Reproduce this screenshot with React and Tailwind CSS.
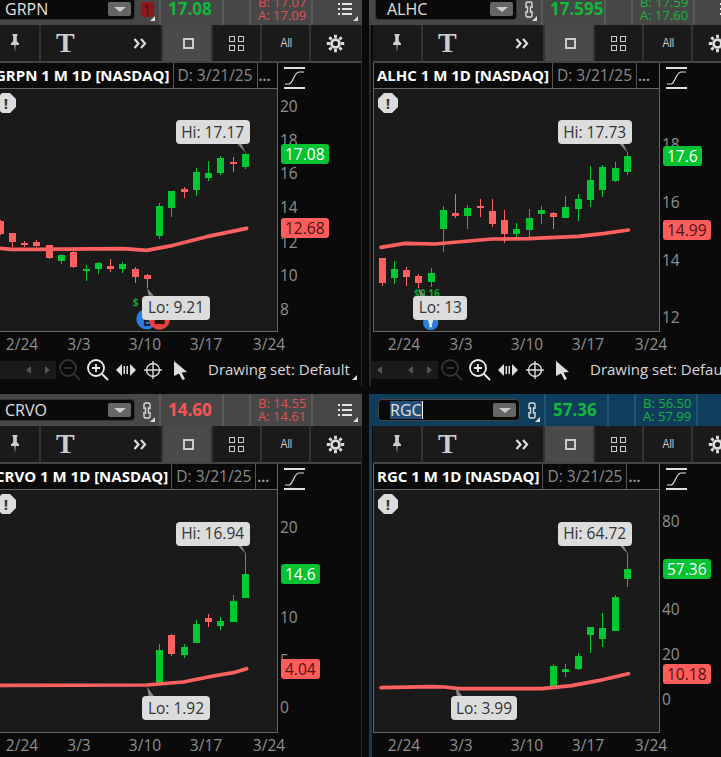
import React from 'react';

const G = '#00c832';
const R = '#ff6060';

const panels = [
  {
    sym: 'GRPN', price: '17.08', up: true, bid: '17.07', ask: '17.09', badge: true, x0: -27, y0: -93,
    candles: [
      [2, 300, 345, 303, 342, R], [38, 339, 382, 339, 366, R], [74, 364, 382, 369, 375, R], [110, 360, 382, 366, 378, R],
      [148, 375, 417, 375, 414, R], [184, 402, 432, 405, 423, G], [221, 393, 444, 396, 441, R], [258, 435, 483, 447, 453, G],
      [295, 426, 462, 429, 447, G], [331, 417, 456, 438, 447, R], [368, 426, 459, 432, 447, G], [405, 441, 489, 447, 471, R],
      [442, 462, 504, 465, 477, R], [478, 249, 357, 258, 348, G], [515, 213, 291, 213, 264, G], [552, 201, 234, 207, 216, R],
      [589, 144, 228, 156, 210, G], [626, 123, 183, 159, 174, G], [662, 108, 165, 114, 159, G], [699, 111, 156, 126, 132, R],
      [736, 99, 147, 102, 141, G],
    ],
    ma: '-27,383 36,388 110,388 370,386 440,391 520,376 620,350 740,325',
    hi: { text: 'Hi: 17.17', x: 527, y: 1, w: 222, ptr: '712,71 724,71 737,98' },
    lo: { text: 'Lo: 9.21', x: 427, y: 527, w: 202, ptr: '441,505 446,527 462,527' },
    axis: [['20', -42], ['18', 60], ['16', 160], ['14', 262], ['12', 365], ['10', 466], ['8', 568]],
    tags: [['17.08', 102, true], ['12.68', 325, false]],
    marks: 'grpn',
  },
  {
    sym: 'ALHC', price: '17.595', up: true, bid: '17.59', ask: '17.60', x0: 24, y0: -93,
    candles: [
      [52, 414, 497, 414, 488, R], [88, 423, 491, 447, 473, G], [124, 441, 497, 450, 470, R], [161, 462, 505, 468, 488, R],
      [199, 444, 500, 459, 485, G], [235, 258, 395, 270, 326, G], [271, 222, 293, 279, 288, R], [308, 255, 326, 264, 288, G],
      [345, 237, 290, 258, 264, R], [382, 237, 320, 273, 312, R], [418, 270, 368, 300, 342, R], [455, 309, 352, 327, 342, G],
      [492, 267, 355, 294, 329, G], [529, 258, 311, 270, 282, G], [565, 276, 326, 279, 290, R], [602, 228, 293, 261, 293, G],
      [640, 222, 303, 237, 266, G], [676, 138, 261, 180, 240, G], [712, 135, 231, 141, 209, G], [750, 126, 185, 144, 182, G],
      [787, 96, 165, 108, 156, G],
    ],
    ma: '48,382 120,370 210,372 380,357 490,356 640,349 720,340 790,330',
    hi: { text: 'Hi: 17.73', x: 578, y: 1, w: 222, ptr: '763,71 775,71 788,98' },
    lo: { text: 'Lo: 13', x: 145, y: 527, w: 162, ptr: '160,505 165,527 181,527' },
    axis: [['18', 72], ['16', 247], ['14', 419], ['12', 590]],
    tags: [['17.6', 108, true], ['14.99', 331, false]],
    marks: 'alhc',
  },
  {
    sym: 'CRVO', price: '14.60', up: false, bid: '14.55', ask: '14.61', x0: -27, y0: -60,
    candles: [
      [478, 402, 520, 420, 520, G], [515, 372, 438, 375, 432, R], [552, 402, 444, 411, 435, G], [589, 330, 399, 342, 399, G],
      [626, 312, 351, 324, 336, R], [662, 321, 360, 333, 348, G], [699, 255, 336, 273, 336, G], [736, 130, 264, 192, 264, G],
    ],
    ma: '-27,526 440,525 550,516 640,498 700,488 740,476',
    hi: { text: 'Hi: 16.94', x: 527, y: 35, w: 222, ptr: '712,105 724,105 737,131' },
    lo: { text: 'Lo: 1.92', x: 427, y: 559, w: 202, ptr: '441,530 446,559 462,559' },
    axis: [['20', 50], ['10', 320], ['5', 450], ['0', 590]],
    tags: [['14.6', 192, true], ['4.04', 478, false]],
  },
  {
    sym: 'RGC', price: '57.36', up: true, bid: '56.50', ask: '57.99', active: true, x0: 24, y0: -60,
    candles: [
      [565, 462, 527, 468, 527, G], [602, 462, 500, 477, 486, G], [640, 429, 480, 438, 477, G], [676, 351, 429, 351, 375, G],
      [712, 309, 411, 354, 387, G], [750, 255, 364, 261, 363, G], [787, 130, 231, 177, 207, G],
    ],
    ma: '48,533 200,530 240,531 280,536 530,536 620,527 700,512 790,491',
    hi: { text: 'Hi: 64.72', x: 578, y: 35, w: 222, ptr: '763,105 775,105 788,131' },
    lo: { text: 'Lo: 3.99', x: 257, y: 559, w: 200, ptr: '271,530 276,559 292,559' },
    axis: [['80', 32], ['40', 298], ['20', 431], ['0', 566]],
    tags: [['57.36', 178, true], ['10.18', 493, false]],
  },
];

const dates = [['2/24', 31], ['3/3', 88], ['3/10', 154], ['3/17', 215], ['3/24', 278]];

function Triangle() {
  return (
    <svg width="5" height="5" viewBox="0 0 5 5" className="absolute right-[4px] bottom-[4px]">
      <polygon points="5,0 5,5 0,5" fill="#ddd" />
    </svg>
  );
}

function LinkIcon() {
  return (
    <svg width="10" height="17" viewBox="0 0 10 17" fill="none" stroke="#ddd" strokeWidth="1.4">
      <path d="M2 5V2.5C2 1.500 2.500 1 3.500 1H6.500C7.500 1 8 1.500 8 2.500V5" />
      <path d="M2 12V14.500C2 15.500 2.500 16 3.500 16H6.500C7.500 16 8 15.500 8 14.500V12" />
      <path d="M1 6H3.500V11H1M9 6H6.500V11H9" />
    </svg>
  );
}

function ListIcon() {
  return (
    <svg width="14" height="14" viewBox="0 0 14 14" fill="#e5e5e5">
      <rect x="0" y="1" width="2" height="2" />
      <rect x="4" y="1" width="10" height="2" />
      <rect x="0" y="6" width="2" height="2" />
      <rect x="4" y="6" width="10" height="2" />
      <rect x="0" y="11" width="2" height="2" />
      <rect x="4" y="11" width="10" height="2" />
    </svg>
  );
}

function Header({ p }) {
  const color = p.up ? 'text-[#12b83a]' : 'text-[#ff5252]';
  const baColor = p.up && !p.badge ? 'text-[#12b83a]' : 'text-[#e05050]';
  const sep = p.active ? 'border-[#1c5678]' : 'border-[#5a5a5a]';
  return (
    <div className={`flex h-[32px] items-center pl-[6px] ${p.active ? 'bg-[#0f3d5c]' : 'bg-[#474747]'}`}>
      <div className={`flex h-[22px] w-[142px] items-center rounded-[4px] bg-[#0a0a0a] pl-[11px] pr-[3px] border ${p.active ? 'border-[#444]' : 'border-[#333]'}`}>
        <span className={`text-[16px] leading-[18px] text-[#e0e0e0] ${p.active ? 'bg-[#264f78] border-r border-white' : ''}`}>{p.sym}</span>
        <div className="ml-auto flex h-[14px] w-[23px] items-center justify-center rounded-[2px] bg-[#666]">
          <div className="h-0 w-0 border-x-[6px] border-t-[5px] border-x-transparent border-t-[#ccc]" />
        </div>
      </div>
      <div className="relative flex h-full w-[24px] items-center justify-center">
        {p.badge ? (
          <div className="flex h-[15px] w-[13px] items-center justify-center rounded-[2px] bg-[#8a1a1a] text-[14px] text-[#4d1010]">1</div>
        ) : (
          <LinkIcon />
        )}
        <Triangle />
      </div>
      <div className={`flex h-full w-[63px] items-center border-l-2 pl-[7px] text-[17px] font-bold ${sep} ${color}`}>{p.price}</div>
      <div className={`h-full w-[27px] border-l-2 ${sep}`} />
      <div className={`flex h-full w-[62px] flex-col justify-center border-l-2 pl-[7px] text-[13px] leading-[13px] ${sep} ${baColor}`}>
        <span>B: {p.bid}</span>
        <span>A: {p.ask}</span>
      </div>
      <div className={`relative flex h-full flex-1 items-center border-l-2 pl-[25px] ${sep}`}>
        <ListIcon />
        <Triangle />
      </div>
    </div>
  );
}

function ToolCell({ w, active, children }) {
  return (
    <div className={`flex h-full items-center justify-center border-r-2 border-[#333] ${w} ${active ? 'bg-[#4a4a4a]' : ''}`}>
      {children}
    </div>
  );
}

function Toolbar() {
  return (
    <div className="flex h-[38px] items-stretch border-b-2 border-[#444] bg-[#1a1a1a]">
      <ToolCell w="w-[50px]">
        <svg width="10" height="19" viewBox="0 0 10 19" fill="#ccc">
          <path d="M2.500 0H7.500V1.500L6.800 2V7L9 9.500V11H5.600L5 18.500L4.400 11H1V9.500L3.200 7V2L2.500 1.500Z" />
        </svg>
      </ToolCell>
      <ToolCell w="w-[122px]">
        <div className="flex w-full items-center pl-[15px]">
          <span className="font-['Liberation_Serif',serif] text-[28px] font-bold leading-[30px] text-[#ccc]">T</span>
          <svg width="14" height="11" viewBox="0 0 14 11" fill="none" stroke="#ddd" strokeWidth="2.200" className="ml-[58px] shrink-0">
            <path d="M1.500 1L5.500 5.500L1.500 10M8 1L12 5.500L8 10" />
          </svg>
        </div>
      </ToolCell>
      <ToolCell w="w-[50px]" active>
        <div className="ml-[2px] h-[11px] w-[11px] border-2 border-[#ccc]" />
      </ToolCell>
      <ToolCell w="w-[49px]">
        <div className="grid grid-cols-2 gap-[3px]">
          <div className="h-[6px] w-[6px] border border-[#ccc]" />
          <div className="h-[6px] w-[6px] border border-[#ccc]" />
          <div className="h-[6px] w-[6px] border border-[#ccc]" />
          <div className="h-[6px] w-[6px] border border-[#ccc]" />
        </div>
      </ToolCell>
      <ToolCell w="w-[49px]">
        <span className="ml-[2px] scale-x-[0.8] font-['Liberation_Sans',sans-serif] text-[13px] text-[#ccc]">All</span>
      </ToolCell>
      <div className="flex h-full flex-1 items-center justify-center pr-[2px]">
        <svg width="19" height="19" viewBox="0 0 24 24" fill="none" stroke="#ddd">
          <circle cx="12" cy="12" r="5" strokeWidth="3.500" />
          <path strokeWidth="3.600" d="M12 1V5M12 19V23M1 12H5M19 12H23M4.200 4.200L7 7M17 17L19.800 19.800M4.200 19.800L7 17M17 7L19.800 4.200" />
        </svg>
      </div>
    </div>
  );
}

function TitleBar({ p }) {
  return (
    <div className="flex h-[26px] items-center border-x border-b border-[#666] bg-[#0a0a0a]">
      <div className="flex h-full items-center whitespace-nowrap px-[3px] text-[15px] font-bold text-white">
        {p.sym} 1 M 1D [NASDAQ]
      </div>
      <div className="flex h-full w-[85px] shrink-0 items-center border-x border-[#555] pl-[4px] text-[15.500px] text-[#8a8a8a]">D: 3/21/25</div>
      <div className="flex-1 pl-[1px] text-[14px] font-bold leading-[14px] text-[#999]">...</div>
    </div>
  );
}

function Marks({ kind }) {
  if (kind === 'grpn') {
    return (
      <g>
        <text x="398" y="557" fontSize="30" fontWeight="700" fill="#0aa82c">$</text>
        <circle cx="440" cy="597" r="31" fill="#2a7de1" />
        <text x="428" y="617" fontSize="42" fontWeight="700" fill="#123">B</text>
        <circle cx="478" cy="597" r="32" fill="#e8403f" />
        <rect x="464" y="600" width="30" height="12" fill="#2b1010" />
      </g>
    );
  }
  if (kind === 'alhc') {
    return (
      <g>
        <text x="147" y="530" fontSize="30" fontWeight="700" fill="#0aa82c">$0.16</text>
        <circle cx="197" cy="608" r="23" fill="#2a7de1" />
        <path d="M188 598H206L201 613V622H193V613Z" fill="#e5e5e5" />
      </g>
    );
  }
  return null;
}

function Tip({ tip, p }) {
  return (
    <div
      className="absolute flex h-[24px] items-center justify-center rounded-[4px] bg-[#dcdcdc] text-[15.500px] text-[#333]"
      style={{ left: (tip.x - p.x0) / 3 - 1, top: (tip.y - p.y0) / 3, width: tip.w / 3 }}
    >
      {tip.text}
    </div>
  );
}

function Chart({ p }) {
  return (
    <div className="relative h-[243px] overflow-hidden border-x border-b border-[#666] bg-[#1a1a1a]">
      <svg width="287" height="243" viewBox={`${p.x0} ${p.y0} 861 729`} className="-ml-px block max-w-none">
        <Marks kind={p.marks} />
        {p.candles.map(([x, wt, wb, bt, bb, c], i) => (
          <g key={i} fill={c} shapeRendering="crispEdges">
            <rect x={x - 1.5} y={wt} width="3" height={wb - wt} />
            <rect x={x - 10.5} y={bt} width="21" height={bb - bt} />
          </g>
        ))}
        <polyline points={p.ma} fill="none" stroke="#ff6060" strokeWidth="11" strokeLinecap="round" strokeLinejoin="round" />
        <polygon points={p.hi.ptr} fill="#888" />
        <polygon points={p.lo.ptr} fill="#888" />
      </svg>
      <div className="absolute left-[4px] top-[4px] flex h-[20px] w-[20px] items-center justify-center bg-[#dcdcdc] text-[15px] font-bold leading-none text-[#333] [clip-path:polygon(30%_0,70%_0,100%_30%,100%_70%,70%_100%,30%_100%,0_70%,0_30%)]">!</div>
      <Tip tip={p.hi} p={p} />
      <Tip tip={p.lo} p={p} />
    </div>
  );
}

function PriceAxis({ p }) {
  return (
    <div className="relative w-[83px] shrink-0">
      <svg width="22" height="22" viewBox="0 0 22 22" fill="none" stroke="#e0e0e0" className="absolute left-[6px] top-[4px]">
        <path strokeWidth="2" d="M0 1H21M0 21H21" />
        <path strokeWidth="1.200" d="M1 17H5C9 17 10 5 15 5H20" />
      </svg>
      {p.axis.map(([label, y]) => (
        <span
          key={label}
          className="absolute left-[2px] -translate-y-1/2 text-[15.500px] leading-[20px] text-[#8f8f8f]"
          style={{ top: (y - p.y0) / 3 + 26 }}
        >
          {label}
        </span>
      ))}
      {p.tags.map(([label, y, up]) => (
        <span
          key={label}
          className={`absolute left-[3px] h-[20px] -translate-y-1/2 rounded-[3px] px-[4px] text-[15.500px] leading-[20px] ${up ? 'bg-[#05c232] text-white' : 'bg-[#ff5c5c] text-[#4a1414]'}`}
          style={{ top: (y - p.y0) / 3 + 26 }}
        >
          {label}
        </span>
      ))}
    </div>
  );
}

function DateAxis() {
  return (
    <div className="relative h-[24px]">
      {dates.map(([label, x]) => (
        <span
          key={label}
          className="absolute top-[1px] -translate-x-1/2 text-[15.500px] leading-[22px] text-[#8f8f8f]"
          style={{ left: x }}
        >
          {label}
        </span>
      ))}
    </div>
  );
}

function BottomBar() {
  return (
    <div className="relative flex h-[28px] w-[370px] items-center">
      <div className="-ml-[2px] flex h-[18px] w-[67px] shrink-0 items-center justify-end gap-[14px] bg-[#1a1a1a] pr-[6px]">
        <div className="mr-[12px] h-0 w-0 border-y-[4px] border-r-[5px] border-y-transparent border-r-[#555]" />
        <div className="h-0 w-0 border-y-[4px] border-r-[5px] border-y-transparent border-r-[#555]" />
        <div className="h-0 w-0 border-y-[4px] border-l-[5px] border-y-transparent border-l-[#555]" />
      </div>
      <svg width="22" height="22" viewBox="0 0 22 22" fill="none" stroke="#333" strokeWidth="1.800" className="ml-[3px] shrink-0">
        <circle cx="9" cy="9" r="8" />
        <path d="M5.500 9H12.500M15 15L21 21" />
      </svg>
      <svg width="22" height="22" viewBox="0 0 22 22" fill="none" stroke="#eee" strokeWidth="1.800" className="ml-[6px] shrink-0">
        <circle cx="9" cy="9" r="8" />
        <path d="M5 9H13M9 5V13M15 15L21 21" />
      </svg>
      <svg width="20" height="12" viewBox="0 0 20 12" fill="#ddd" className="ml-[7px] shrink-0">
        <polygon points="0,6 6,0 6,12" />
        <rect x="7.500" y="2" width="1.500" height="8" />
        <rect x="10.500" y="2" width="1.500" height="8" />
        <polygon points="20,6 14,0 14,12" />
      </svg>
      <svg width="18" height="18" viewBox="0 0 18 18" fill="none" stroke="#ddd" strokeWidth="1.400" className="ml-[8px] shrink-0">
        <circle cx="9" cy="9" r="6.500" />
        <path d="M9 0V18M0 9H18" />
      </svg>
      <svg width="15" height="19" viewBox="0 0 15 19" fill="#ddd" className="ml-[11px] shrink-0">
        <polygon points="1,0 14,11 8.500,11.500 12,18 9.500,19 6,12.500 1,15" />
      </svg>
      <span className="ml-[20px] -mt-[1px] whitespace-nowrap text-[15px] text-[#d8d8d8]">Drawing set: Default</span>
      <Triangle />
    </div>
  );
}

function Panel({ p, bottom }) {
  return (
    <div className={`h-[393px] w-[375px] shrink-0 bg-[#0a0a0a] ${p.active ? 'border-l-[3px] border-[#0f3d5c]' : 'shadow-[inset_2px_0_0_#2a2a2a,inset_-1px_0_0_#2a2a2a]'} ${bottom ? 'shadow-[inset_2px_-2px_0_#2a2a2a,inset_-1px_-2px_0_#2a2a2a]' : ''}`}>
      <Header p={p} />
      <div className={`pr-[1px] ${p.active ? 'pl-[1px]' : 'pl-[4px]'}`}>
        <Toolbar />
        <div className="flex">
          <div className="w-[287px] shrink-0">
            <TitleBar p={p} />
            <Chart p={p} />
            <DateAxis />
            {bottom && <BottomBar />}
          </div>
          <PriceAxis p={p} />
        </div>
      </div>
    </div>
  );
}

export default function App() {
  return (
    <div className="h-[757px] w-[721px] overflow-hidden bg-[#0a0a0a] font-['Open_Sans',sans-serif]">
      <div className="-ml-[13px] -mt-[7px] flex w-[800px] flex-col gap-[8px]">
        <div className="flex h-[393px] gap-[7px]">
          <Panel p={panels[0]} bottom />
          <Panel p={panels[1]} bottom />
        </div>
        <div className="flex gap-[7px]">
          <Panel p={panels[2]} />
          <Panel p={panels[3]} />
        </div>
      </div>
    </div>
  );
}
